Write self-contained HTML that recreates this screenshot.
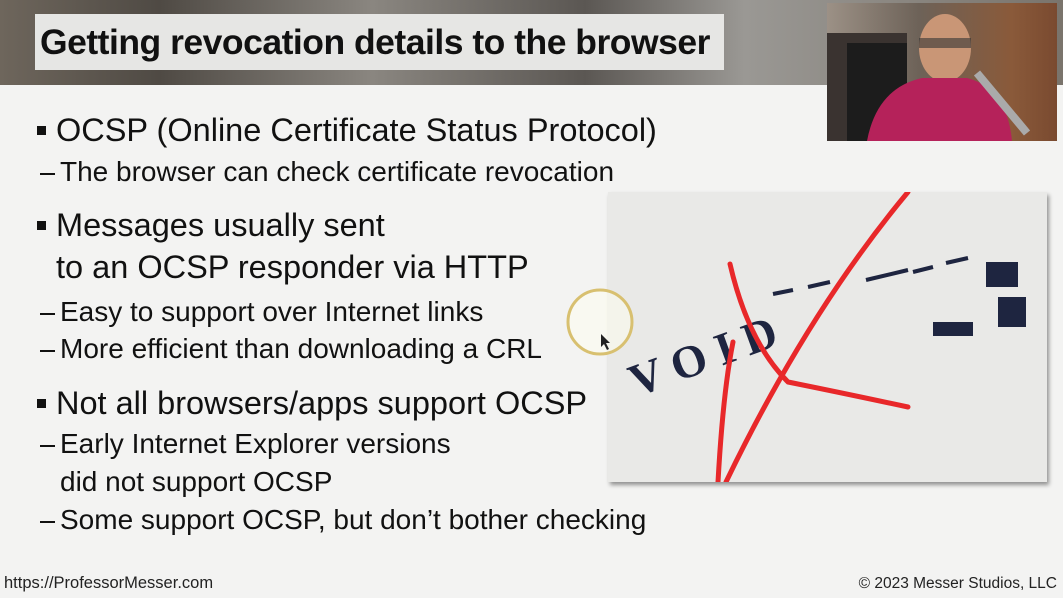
<!DOCTYPE html>
<html><head><meta charset="utf-8"><style>
body{margin:0;width:1063px;height:598px;overflow:hidden;background:#f3f3f2;font-family:"Liberation Sans",sans-serif;position:relative;color:#111}
.hdr{position:absolute;left:0;top:0;width:1063px;height:85px;background:linear-gradient(90deg,#6e665c 0%,#4f4a44 15%,#8a8680 35%,#5b5753 55%,#9a9894 70%,#7a746c 100%)}
.title{position:absolute;left:35px;top:14px;width:689px;height:56px;background:#e6e6e4;font-size:35.5px;font-weight:bold;line-height:56px;padding-left:5px;box-sizing:border-box;letter-spacing:-0.5px;white-space:nowrap}
.cam{position:absolute;left:827px;top:3px;width:230px;height:138px;background:linear-gradient(90deg,#9c9186 0%,#6d6258 40%,#8a5a3a 80%,#7a4a30 100%);overflow:hidden}
.t{position:absolute;white-space:nowrap}
.b{font-size:32.5px;left:56px}
.s{font-size:28px;left:60px}
.bu{position:absolute;left:37px;width:9px;height:9px;background:#111}
.d{position:absolute;left:40px;width:15px;height:2px;background:#111}
.foot{position:absolute;top:574px;font-size:16.5px;color:#222}
.img{position:absolute;left:608px;top:192px;width:439px;height:290px;background:#e9e9e7;box-shadow:2px 3px 4px rgba(0,0,0,.4);overflow:hidden}
</style></head><body>
<div class="hdr"></div>
<div class="title">Getting revocation details to the browser</div>
<div class="cam">
<svg width="230" height="138"><rect x="0" y="30" width="80" height="108" fill="#3a3330"/><rect x="20" y="40" width="60" height="98" fill="#1c1c1c"/>
<ellipse cx="118" cy="45" rx="26" ry="34" fill="#c99676"/><rect x="92" y="35" width="52" height="10" fill="#333" opacity=".6"/>
<path d="M40 138 Q50 85 95 75 L140 75 Q180 85 185 138Z" fill="#b5225a"/>
<path d="M150 70 L200 130" stroke="#aaa" stroke-width="8"/></svg>
</div>
<div class="bu" style="top:126px"></div><div class="t b" style="top:112px">OCSP (Online Certificate Status Protocol)</div>
<div class="d" style="top:173px"></div><div class="t s" style="top:156px">The browser can check certificate revocation</div>
<div class="bu" style="top:221px"></div><div class="t b" style="top:207px">Messages usually sent</div>
<div class="t b" style="top:249px">to an OCSP responder via HTTP</div>
<div class="d" style="top:313px"></div><div class="t s" style="top:296px">Easy to support over Internet links</div>
<div class="d" style="top:350px"></div><div class="t s" style="top:333px">More efficient than downloading a CRL</div>
<div class="bu" style="top:399px"></div><div class="t b" style="top:385px">Not all browsers/apps support OCSP</div>
<div class="d" style="top:445px"></div><div class="t s" style="top:428px">Early Internet Explorer versions</div>
<div class="t s" style="top:466px">did not support OCSP</div>
<div class="d" style="top:521px"></div><div class="t s" style="top:504px">Some support OCSP, but don’t bother checking</div>
<div class="img"><svg width="439" height="290">
<g fill="#1e2540" font-family="Liberation Serif,serif" font-weight="bold" font-size="46">
<text x="28" y="205" transform="rotate(-20 28 205)">V O I D</text></g>
<g stroke="#1e2540" stroke-width="4"><path d="M165 102 L185 98 M200 95 L222 90 M258 88 L300 78 M305 80 L325 75 M338 71 L360 66"/></g>
<rect x="378" y="70" width="32" height="25" fill="#1e2540"/><rect x="390" y="105" width="28" height="30" fill="#1e2540"/><rect x="325" y="130" width="40" height="14" fill="#1e2540"/>
<g stroke="#e8282a" stroke-width="5" fill="none" stroke-linecap="round"><path d="M118 290 Q200 120 300 0"/><path d="M122 72 Q140 150 180 190 Q230 200 300 215"/><path d="M110 290 Q115 200 125 150"/></g>
</svg></div>
<svg style="position:absolute;left:565px;top:287px" width="70" height="70"><circle cx="35" cy="35" r="32" fill="rgba(255,255,240,.5)" stroke="#d8c070" stroke-width="3"/><path d="M36 47 L36 60 L39 57 L42 63 L44 62 L41 56 L45 56Z" fill="#222"/></svg>
<div class="foot" style="left:4px">https://ProfessorMesser.com</div>
<div class="foot" style="right:6px;font-size:15.5px;top:575px">© 2023 Messer Studios, LLC</div>
</body></html>
